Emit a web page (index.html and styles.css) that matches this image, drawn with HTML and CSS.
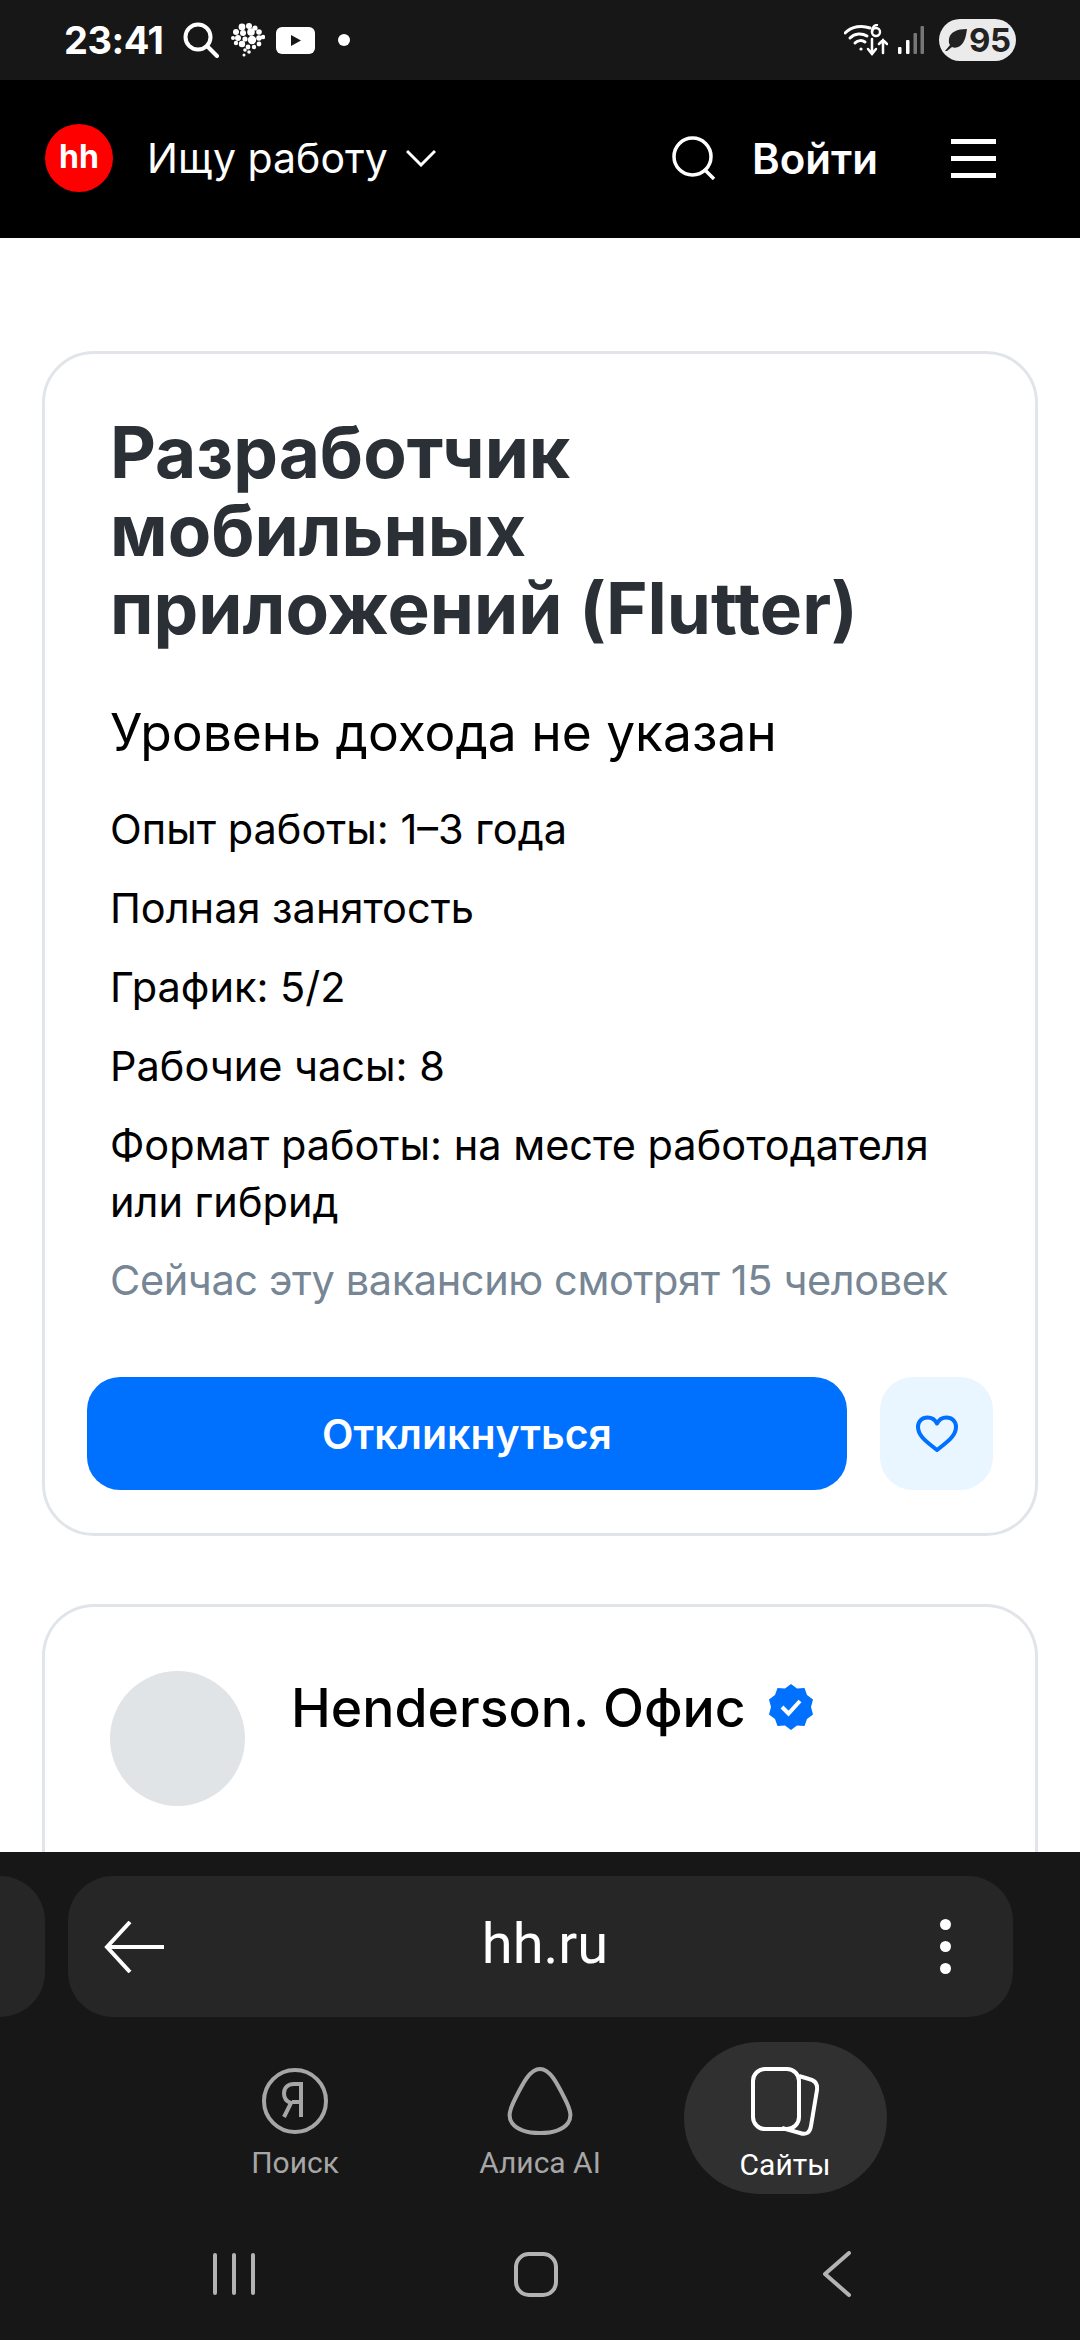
FILE: index.html
```html
<!DOCTYPE html>
<html lang="ru">
<head>
    <meta charset="UTF-8">
    <meta name="viewport" content="width=device-width, initial-scale=1.0">
    <title>Разработчик мобильных приложений (Flutter)</title>
    <link rel="stylesheet" href="styles.css">
</head>
<body>
    <div class="status-bar">
        <div class="status-left">
            <span class="time">23:41</span>
            <svg class="st-search" width="36" height="36" viewBox="0 0 36 36" fill="none" stroke="#fff" stroke-width="4" stroke-linecap="round"><circle cx="15" cy="15" r="12.5"/><path d="M24 24l10 10"/></svg>
            <svg class="st-brain" width="34" height="34" viewBox="0 0 34 34" fill="#fff"><circle cx="11" cy="4" r="3.400"/><circle cx="18" cy="3" r="3"/><circle cx="24" cy="5" r="2.600"/><circle cx="5" cy="9" r="3"/><circle cx="12" cy="10" r="3"/><circle cx="20" cy="9" r="3.800"/><circle cx="28" cy="9" r="2.800"/><circle cx="32" cy="14" r="2.200"/><circle cx="2" cy="15" r="2"/><circle cx="7" cy="15" r="3"/><circle cx="14" cy="16" r="2.600"/><circle cx="21" cy="17" r="4.200"/><circle cx="28" cy="15" r="2.800"/><circle cx="5" cy="20" r="2.200"/><circle cx="11" cy="21" r="3.200"/><circle cx="28" cy="21" r="2.400"/><circle cx="17" cy="24" r="2.400"/><circle cx="23" cy="24" r="2.200"/><circle cx="14" cy="27" r="1.800"/><circle cx="18" cy="29" r="1.800"/><circle cx="13" cy="32" r="1.500"/></svg>
            <svg class="st-yt" width="39" height="27" viewBox="0 0 39 27"><rect width="39" height="27" rx="6" fill="#fff"/><path d="M15 8v11l10-5.500z" fill="#171717"/></svg>
            <span class="st-dot"></span>
        </div>
        <div class="status-right">
            <svg width="44" height="33" viewBox="0 0 44 33" fill="none" stroke="#fff" stroke-width="3" stroke-linecap="round"><path d="M1 9C8 2 18 1 26 4"/><path d="M6 14c5-5 12-5 17-2"/><path d="M11 19c3-3 7-3 10-1"/><circle cx="17" cy="25" r="1.600" fill="#fff" stroke="none"/><path d="M28 15v15M24 25l4 5 4-5" stroke-width="2.500"/><path d="M39 29V16M35 20l4-4 4 4" stroke-width="2.500"/><circle cx="32" cy="8" r="4" stroke-width="2.400"/><path d="M28 8c0-4 2-7 5-7" stroke-width="2.400"/></svg>
            <svg class="st-signal" width="26" height="28" viewBox="0 0 26 28"><rect x="0" y="21" width="3.500" height="7" rx="1" fill="#fff"/><rect x="8" y="14" width="3.500" height="14" rx="1" fill="#fff"/><rect x="15.500" y="7" width="3.500" height="21" rx="1" fill="#777"/><rect x="22.500" y="0" width="3.500" height="28" rx="1" fill="#777"/></svg>
            <div class="battery">
                <svg width="24" height="24" viewBox="0 0 24 24" fill="#222"><path d="M23 1C13 1 6 4 5 11c-.4 3 0 5 1 6L1 23l2 0 5-4c2 1 5 1 8-1 5-4 6-10 7-17z"/></svg>
                <span>95</span>
            </div>
        </div>
    </div>

    <header class="site-header">
        <div class="logo">hh</div>
        <div class="role">
            <span>Ищу работу</span>
            <svg width="30" height="18" viewBox="0 0 30 18" fill="none" stroke="#fff" stroke-width="3"><path d="M1 2l14 14L29 2"/></svg>
        </div>
        <svg class="head-search" width="44" height="44" viewBox="0 0 44 44" fill="none" stroke="#fff" stroke-width="3.500"><circle cx="20.500" cy="20.500" r="18.500"/><path d="M32 33l10 10"/></svg>
        <span class="login">Войти</span>
        <div class="burger"><span></span><span></span><span></span></div>
    </header>

    <main class="page">
        <section class="card vacancy">
            <h1>Разработчик мобильных приложений (Flutter)</h1>
            <p class="salary">Уровень дохода не указан</p>
            <p class="info">Опыт работы: 1–3 года</p>
            <p class="info">Полная занятость</p>
            <p class="info">График: 5/2</p>
            <p class="info">Рабочие часы: 8</p>
            <p class="info">Формат работы: на месте работодателя или гибрид</p>
            <p class="info muted">Сейчас эту вакансию смотрят 15 человек</p>
            <div class="actions">
                <button class="apply">Откликнуться</button>
                <button class="fav">
                    <svg width="44" height="38" viewBox="0 0 44 38" fill="none" stroke="#0070ff" stroke-width="4" stroke-linejoin="round"><path d="M22 35C12 27 3 21 3 12c0-5.500 4-9.500 9.500-9.500 4 0 7.500 2 9.500 6 2-4 5.500-6 9.500-6C37 2.500 41 6.500 41 12c0 9-9 15-19 23z"/></svg>
                </button>
            </div>
        </section>

        <section class="card company">
            <div class="avatar"></div>
            <div class="company-name">
                <span>Henderson. Офис</span>
                <svg width="46" height="46" viewBox="0 0 46 46"><path d="M23 0l6 4.500 7.500-.5 2.500 7 6 4.500-2 7.500 2 7.500-6 4.500-2.500 7-7.500-.5-6 4.500-6-4.500-7.500.5-2.500-7-6-4.500 2-7.500-2-7.500 6-4.500 2.500-7 7.500.5z" fill="#0070ff"/><path d="M14 23l6.500 6.500L32 17" fill="none" stroke="#fff" stroke-width="4"/></svg>
            </div>
        </section>
    </main>

    <footer class="browser">
        <div class="address-row">
            <div class="stub"></div>
            <div class="address">
                <svg width="60" height="52" viewBox="0 0 60 52" fill="none" stroke="#fff" stroke-width="4"><path d="M26 1L3 26l23 25M3 26h57"/></svg>
                <span class="url">hh.ru</span>
                <div class="kebab"><span></span><span></span><span></span></div>
            </div>
        </div>
        <nav class="tabs">
            <div class="tab">
                <svg width="68" height="68" viewBox="0 0 68 68" fill="none" stroke="#a6a6a6" stroke-width="4"><circle cx="34" cy="34" r="31"/><path d="M40 50V17h-7c-6 0-10 3.500-10 9.500 0 5 2.500 8 7 9.500l-7 14M40 35h-9"/></svg>
                <span>Поиск</span>
            </div>
            <div class="tab">
                <svg width="68" height="68" viewBox="0 0 68 68" fill="none" stroke="#a6a6a6" stroke-width="4"><path d="M34 2C44 2 51 16 59 32 65 44 66 50 62 56 56 64 45 66 34 66S12 64 6 56C2 50 3 44 9 32 17 16 24 2 34 2z"/></svg>
                <span>Алиса AI</span>
            </div>
            <div class="tab active">
                <svg width="68" height="70" viewBox="0 0 68 70" fill="none" stroke="#fff" stroke-width="4"><rect x="2" y="2" width="46" height="60" rx="12"/><path d="M48 9l10 3c6 1.500 9 5 8 11l-6 36c-1 7-5 9-11 7l-18-5"/></svg>
                <span>Сайты</span>
            </div>
        </nav>
        <div class="sys-nav">
            <div class="sys-recent"><span></span><span></span><span></span></div>
            <div class="sys-home"></div>
            <svg width="30" height="46" viewBox="0 0 30 46" fill="none" stroke="#b3b3b3" stroke-width="4" stroke-linecap="round" stroke-linejoin="round"><path d="M27 2L3 23l24 21"/></svg>
        </div>
    </footer>
</body>
</html>
```

FILE: styles.css
```css
* {
    box-sizing: border-box;
}
html, body {
    margin: 0;
    height: 2340px;
}
body {
    display: flex;
    flex-direction: column;
    overflow: hidden;
    font-family: Inter, "Noto Sans", sans-serif;
    background-color: white;
    color: black;
}
p, h1 {
    margin: 0;
}

/* status bar */
.status-bar {
    height: 80px;
    flex-shrink: 0;
    background-color: #171717;
    display: flex;
    justify-content: space-between;
    align-items: center;
    padding: 0 64px 0 64px;
    color: white;
}
.status-left, .status-right {
    display: flex;
    align-items: center;
}
.time {
    font-size: 38px;
    font-weight: 700;
    width: 119px;
    letter-spacing: -0.5px;
}
.st-brain {
    margin-left: 12px;
}
.st-yt {
    margin-left: 11px;
}
.st-dot {
    width: 12px;
    height: 12px;
    border-radius: 50%;
    background-color: white;
    margin-left: 23px;
}
.st-signal {
    margin-left: 10px;
}
.battery {
    width: 77px;
    height: 42px;
    margin-left: 15px;
    border-radius: 21px;
    background-color: #ebebeb;
    display: flex;
    align-items: center;
    padding-left: 5px;
    gap: 1px;
    color: #222;
    font-size: 33px;
    font-weight: 700;
    letter-spacing: -0.5px;
}

/* header */
.site-header {
    height: 158px;
    flex-shrink: 0;
    background-color: black;
    color: white;
    display: flex;
    align-items: center;
    padding: 0 84px 2px 45px;
}
.logo {
    width: 68px;
    height: 68px;
    border-radius: 50%;
    background-color: #ff0000;
    color: white;
    font-size: 32px;
    font-weight: 700;
    text-align: center;
    line-height: 66px;
}
.role {
    display: flex;
    align-items: center;
    gap: 18px;
    margin-left: 34px;
    font-size: 41px;
    font-weight: 400;
}
.head-search {
    margin-left: auto;
}
.login {
    margin-left: 36px;
    font-size: 42px;
    font-weight: 600;
}
.burger {
    margin-left: 73px;
    width: 45px;
    display: flex;
    flex-direction: column;
    gap: 12px;
}
.burger span {
    height: 5px;
    background-color: white;
}

/* page */
.page {
    flex: 1;
    overflow: hidden;
    padding: 113px 42px 0;
}
.card {
    border: 3px solid #e1e5e9;
    border-radius: 52px;
    background-color: white;
}
.vacancy {
    height: 1185px;
    padding: 59px 41px 0 65px;
}
.vacancy h1 {
    font-size: 71px;
    font-weight: 700;
    line-height: 78px;
    color: #2b3037;
    width: 800px;
    margin-bottom: 52px;
}
.salary {
    font-size: 51.5px;
    line-height: 66px;
    margin-bottom: 36px;
}
.info {
    font-size: 41.5px;
    line-height: 57px;
    margin-bottom: 22px;
}
.muted {
    color: #768694;
    letter-spacing: -0.4px;
    margin-top: -1px;
}
.actions {
    display: flex;
    gap: 33px;
    margin: 68px 0 0 -23px;
}
.actions button {
    height: 113px;
    border: none;
    border-radius: 33px;
}
.apply {
    width: 760px;
    background-color: #0070ff;
    color: white;
    font-family: Inter, sans-serif;
    font-size: 41px;
    font-weight: 600;
}
.fav {
    width: 113px;
    background-color: #e9f5ff;
    display: flex;
    align-items: center;
    justify-content: center;
}
.company {
    height: 400px;
    margin-top: 68px;
    border-bottom: none;
    padding: 64px 0 0 65px;
    display: flex;
}
.avatar {
    width: 135px;
    height: 135px;
    border-radius: 50%;
    background-color: #e1e4e7;
}
.company-name {
    display: flex;
    align-items: center;
    gap: 22px;
    height: 72px;
    margin-left: 46px;
    font-size: 53.5px;
    font-weight: 500;
}

/* browser bar */
.browser {
    height: 488px;
    flex-shrink: 0;
    background-color: #171717;
    color: white;
    font-family: Roboto, sans-serif;
}
.address-row {
    display: flex;
    gap: 23px;
    padding-top: 24px;
}
.stub {
    width: 45px;
    height: 141px;
    background-color: #262626;
    border-radius: 0 45px 45px 0;
}
.address {
    width: 945px;
    height: 141px;
    border-radius: 45px;
    background-color: #262626;
    display: flex;
    align-items: center;
    justify-content: space-between;
    padding: 0 62px 0 36px;
}
.url {
    font-size: 56px;
    margin: 0 0 5px -14px;
}
.kebab {
    display: flex;
    flex-direction: column;
    gap: 11px;
}
.kebab span {
    width: 11px;
    height: 11px;
    border-radius: 50%;
    background-color: white;
}
.tabs {
    display: grid;
    grid-template-columns: 203px 203px 203px;
    justify-content: center;
    gap: 42px;
    margin-top: 25px;
    height: 152px;
}
.tab {
    display: flex;
    flex-direction: column;
    align-items: center;
    padding-top: 25px;
    color: #a6a6a6;
    font-size: 30px;
}
.tab span {
    margin-top: 10px;
}
.tab.active {
    background-color: #303030;
    border-radius: 76px;
    color: white;
}
.sys-nav {
    display: flex;
    align-items: center;
    justify-content: space-between;
    padding: 57px 228px 0 213px;
}
.sys-recent {
    display: flex;
    gap: 15px;
}
.sys-recent span {
    width: 4px;
    height: 42px;
    background-color: #b3b3b3;
    border-radius: 2px;
}
.sys-home {
    width: 44px;
    height: 45px;
    margin-right: 6px;
    border: 4px solid #b3b3b3;
    border-radius: 15px;
}
```
